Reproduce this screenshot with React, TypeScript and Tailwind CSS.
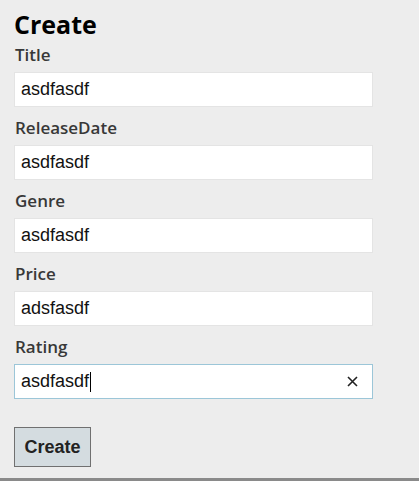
const fields = [
  { label: "Title", value: "asdfasdf" },
  { label: "ReleaseDate", value: "asdfasdf" },
  { label: "Genre", value: "asdfasdf" },
  { label: "Price", value: "adsfasdf" },
]

export default function App() {
  return (
    <div className="min-h-[481px] bg-[#ededed] flex flex-col">
      <div className="flex-1 pl-[14px] pt-[7px]">
        <h1 className="text-[25px] leading-[34px] font-bold text-black font-['Open_Sans',sans-serif] mb-[3px]">
          Create
        </h1>
        {fields.map((f) => (
          <div key={f.label} className="mb-[10px]">
            <div className="h-[22px] mb-[6px] pl-px text-[17px] leading-[22px] font-semibold text-[#383838] font-['Open_Sans',sans-serif]">
              {f.label}
            </div>
            <div className="w-[359px] h-[35px] bg-white border border-[#e4e4e4] flex items-center px-[6px] text-[18px] text-[#111] font-['Liberation_Sans',sans-serif]">
              {f.value}
            </div>
          </div>
        ))}
        <div>
          <div className="h-[22px] mb-[6px] pl-px text-[17px] leading-[22px] font-semibold text-[#383838] font-['Open_Sans',sans-serif]">
            Rating
          </div>
          <div className="w-[359px] h-[35px] bg-white border border-[#9cc6d8] flex items-center px-[6px] text-[18px] text-[#111] font-['Liberation_Sans',sans-serif]">
            <span>asdfasdf</span>
            <span className="w-px h-[20px] bg-black ml-px" />
            <svg className="ml-auto mr-[8px]" width="11" height="11" viewBox="0 0 11 11">
              <path d="M1 1L10 10M10 1L1 10" stroke="#222" strokeWidth="1.6" />
            </svg>
          </div>
        </div>
        <button className="mt-[28px] w-[77px] h-[40px] bg-[#d4dce0] border border-[#707070] text-[18px] font-bold text-[#222] font-['Liberation_Sans',sans-serif]">
          Create
        </button>
      </div>
      <div className="h-[3px] bg-[#8a8a8a] mt-[11px]" />
    </div>
  )
}
